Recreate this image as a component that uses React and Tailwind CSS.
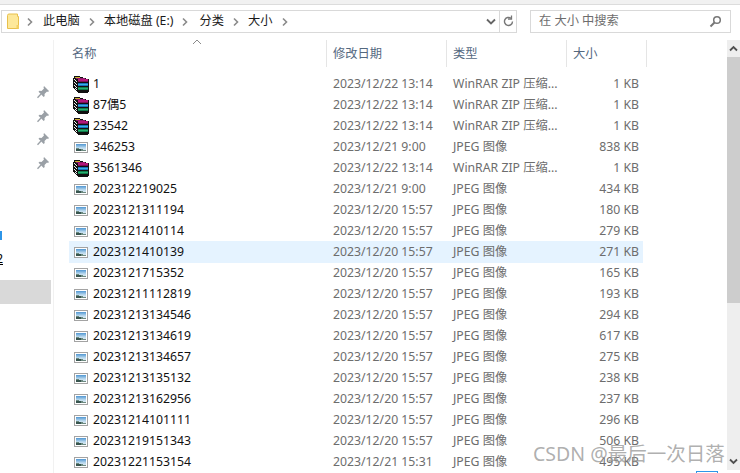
import React from "react";

const zip = "WinRAR ZIP 压缩...";
const jpg = "JPEG 图像";
const rows = [
  ["1", "z", "2023/12/22 13:14", zip, "1 KB"],
  ["87偶5", "z", "2023/12/22 13:14", zip, "1 KB"],
  ["23542", "z", "2023/12/22 13:14", zip, "1 KB"],
  ["346253", "j", "2023/12/21 9:00", jpg, "838 KB"],
  ["3561346", "z", "2023/12/22 13:14", zip, "1 KB"],
  ["202312219025", "j", "2023/12/21 9:00", jpg, "434 KB"],
  ["2023121311194", "j", "2023/12/20 15:57", jpg, "180 KB"],
  ["2023121410114", "j", "2023/12/20 15:57", jpg, "279 KB"],
  ["2023121410139", "j", "2023/12/20 15:57", jpg, "271 KB", true],
  ["2023121715352", "j", "2023/12/20 15:57", jpg, "165 KB"],
  ["20231211112819", "j", "2023/12/20 15:57", jpg, "193 KB"],
  ["20231213134546", "j", "2023/12/20 15:57", jpg, "294 KB"],
  ["20231213134619", "j", "2023/12/20 15:57", jpg, "617 KB"],
  ["20231213134657", "j", "2023/12/20 15:57", jpg, "275 KB"],
  ["20231213135132", "j", "2023/12/20 15:57", jpg, "238 KB"],
  ["20231213162956", "j", "2023/12/20 15:57", jpg, "237 KB"],
  ["20231214101111", "j", "2023/12/20 15:57", jpg, "296 KB"],
  ["20231219151343", "j", "2023/12/20 15:57", jpg, "506 KB"],
  ["20231221153154", "j", "2023/12/21 15:31", jpg, "495 KB"],
];

function Zip() {
  return (
    <svg width="18" height="18" viewBox="0 0 18 18" shapeRendering="crispEdges" className="shrink-0">
      <path d="M2 0h6v1h3v1h3v1h3v13h-1v1H6v-1H5v-1H4v-1H3v-1H2v-1H1V2h1z" fill="#111" />
      <rect x="3" y="1" width="5" height="1" fill="#d0b030" />
      <rect x="4" y="2" width="9" height="1" fill="#8e1a6c" />
      <rect x="6" y="3" width="10" height="3" fill="#b3177a" />
      <rect x="6" y="5" width="10" height="1" fill="#7d1058" />
      <rect x="6" y="7" width="10" height="3" fill="#1c6fc0" />
      <rect x="6" y="8" width="10" height="1" fill="#35b4e0" />
      <rect x="6" y="11" width="10" height="3" fill="#0f7d4c" />
      <rect x="6" y="12" width="10" height="1" fill="#28b070" />
      <path d="M2 3h1v1h1v1h1v1H4V5H3V4H2zM2 6h1v1h1v1h1v1H4V8H3V7H2zM2 9h1v1h1v1h1v1H4v-1H3v-1H2zM3 12h1v1h1v1H4v-1H3z" fill="#f4f4f4" />
    </svg>
  );
}

function Jpg() {
  return (
    <svg width="18" height="18" viewBox="0 0 18 18" shapeRendering="crispEdges" className="shrink-0">
      <rect x="2.500" y="3.500" width="13" height="10" fill="#fff" stroke="#a3a3a3" />
      <defs>
        <linearGradient id="sky" x1="0" y1="0" x2="0" y2="1">
          <stop offset="0" stopColor="#4f96d2" />
          <stop offset="0.55" stopColor="#bcdaee" />
          <stop offset="1" stopColor="#e4eef4" />
        </linearGradient>
      </defs>
      <rect x="4" y="5" width="10" height="7" fill="url(#sky)" />
      <path d="M4 9h3v1h4v1h3v1H4z" fill="#6c8a80" />
      <rect x="4" y="10" width="5" height="2" fill="#38554f" />
    </svg>
  );
}

function Pin() {
  return (
    <svg width="14" height="14" viewBox="0 0 14 14" className="block">
      <path d="M8 1l5 5-1 1-1-.5L8.500 9l.2 2-1 1L2.500 6.800l1-1 2 .2L8 3.500 7.500 2.500z" fill="#9aa0a6" />
      <path d="M5 9l-3.500 3.800" stroke="#9aa0a6" strokeWidth="1.300" />
    </svg>
  );
}

function Chev() {
  return (
    <svg width="8" height="10" viewBox="0 0 8 10" className="block shrink-0">
      <path d="M2 1.500 5.500 5 2 8.500" fill="none" stroke="#8a8a8a" strokeWidth="1.600" />
    </svg>
  );
}

function Folder() {
  return (
    <svg width="14" height="17" viewBox="0 0 14 17" className="shrink-0">
      <path d="M1.500 2.500q0-1.500 1.500-1.500h8.500v2.500h1v12h-11z" fill="#fde89a" stroke="#e8c04c" />
      <rect x="10.500" y="12" width="2.500" height="3.500" fill="#f3cf62" />
    </svg>
  );
}

function Icon({ t }) {
  return t === "z" ? <Zip /> : <Jpg />;
}

export default function App() {
  return (
    <div className="relative w-[740px] h-[473px] overflow-hidden bg-white text-[12.25px] font-['Noto_Sans','Noto_Sans_CJK_SC',sans-serif]">
      <div className="h-[5px] bg-[#f1f1f1] border-b border-[#dcdcdc]" />

      <div className="flex h-[23px] mt-[5px] pl-px pr-[9px] gap-[13px]">
        <div className="flex w-[516px] border border-[#d9d9d9]">
          <div className="flex flex-1 items-center pl-[4px] text-[#1a1a1a]">
            <Folder />
            <span className="ml-[6px]"><Chev /></span>
            <span className="ml-[9px]">此电脑</span>
            <span className="ml-[8px]"><Chev /></span>
            <span className="ml-[8px]">本地磁盘 (E:)</span>
            <span className="ml-[8px]"><Chev /></span>
            <span className="ml-[10px]">分类</span>
            <span className="ml-[8px]"><Chev /></span>
            <span className="ml-[8px]">大小</span>
            <span className="ml-[9px]"><Chev /></span>
          </div>
          <div className="flex items-center pr-[3px]">
            <svg width="10" height="8" viewBox="0 0 10 8"><path d="M1 1.500 5 5.500 9 1.500" fill="none" stroke="#666" strokeWidth="1.800" /></svg>
          </div>
          <div className="flex items-center justify-center w-[17px] border-l border-[#d9d9d9]">
            <svg width="13" height="13" viewBox="0 0 13 13"><path d="M10.500 6.500a4 4 0 1 1-1.500-3.200" fill="none" stroke="#777" strokeWidth="1.400" /><path d="M9.500 .5v3.500H6" fill="none" stroke="#777" strokeWidth="1.300" /></svg>
          </div>
        </div>
        <div className="flex flex-1 items-center justify-between border border-[#d9d9d9] pl-[8px] pr-[8px] text-[#6d6d6d]">
          <span>在 大小 中搜索</span>
          <svg width="13" height="13" viewBox="0 0 13 13"><circle cx="8" cy="5" r="3.300" fill="none" stroke="#777" strokeWidth="1.500" /><path d="M5.500 7.500 1.500 11.500" stroke="#777" strokeWidth="2" /></svg>
        </div>
      </div>

      <div className="flex h-[433px] mt-[7px]">
        <aside className="w-[54px] shrink-0 border-r border-[#f1f1f1]">
          <div className="flex flex-col items-end gap-[9.700px] pt-[45px] pr-[3px]">
            <Pin /><Pin /><Pin /><Pin />
          </div>
          <div className="mt-[61px] w-[2px] h-[9px] bg-[#2d95e8]" />
          <div className="mt-[13px] w-[3px] flex justify-end overflow-hidden text-[12px] leading-[11px] border-b border-black text-black">
            <span>2</span>
          </div>
          <div className="mt-[15px] w-[51px] h-[24px] bg-[#d9d9d9]" />
        </aside>

        <main className="flex-1 min-w-0 flex flex-col pl-[15px]">
          <div className="relative flex h-[27px] text-[#54687f]">
            <div className="w-[258px] pl-[3px] pt-[5px] border-r border-[#e5e5e5]">名称</div>
            <div className="w-[120px] pl-[6px] pt-[5px] border-r border-[#e5e5e5]">修改日期</div>
            <div className="w-[120px] pl-[6px] pt-[5px] border-r border-[#e5e5e5]">类型</div>
            <div className="w-[80px] pl-[6px] pt-[5px] border-r border-[#e5e5e5]">大小</div>
            <svg width="10" height="6" viewBox="0 0 10 6" className="absolute left-[123px] top-[-1px]"><path d="M1 5 5 1 9 5" fill="none" stroke="#8a8a8a" /></svg>
          </div>
          <div className="mt-[7px] flex flex-col w-[574px]">
            {rows.map((r) => (
              <div key={r[0]} className={r[5] ? "flex h-[22px] -mt-px pt-px items-center bg-[#e5f3ff]" : "flex h-[21px] items-center"}>
                <div className="flex items-center w-[258px] pl-[3px] text-[#111]">
                  <Icon t={r[1]} />
                  <span className="ml-[3px] whitespace-nowrap">{r[0]}</span>
                </div>
                <div className="w-[120px] pl-[6px] text-[#6d6d6d] whitespace-nowrap">{r[2]}</div>
                <div className="w-[108px] pl-[6px] text-[#6d6d6d] whitespace-nowrap">{r[3]}</div>
                <div className="w-[84px] text-right text-[#6d6d6d] whitespace-nowrap">{r[4]}</div>
              </div>
            ))}
          </div>
        </main>

        <div className="w-[13px] shrink-0 mb-[3px] flex flex-col bg-[#eeeeee]">
          <div className="h-[17px] flex items-center justify-center">
            <svg width="9" height="7" viewBox="0 0 9 7"><path d="M1 5.500 4.500 2 8 5.500" fill="none" stroke="#505050" strokeWidth="1.800" /></svg>
          </div>
          <div className="h-[246px] bg-[#cdcdcd]" />
          <div className="flex-1" />
          <div className="h-[17px] flex items-center justify-center">
            <svg width="9" height="7" viewBox="0 0 9 7"><path d="M1 1.500 4.500 5 8 1.500" fill="none" stroke="#505050" strokeWidth="1.800" /></svg>
          </div>
        </div>
      </div>

      <div className="absolute left-[533px] top-[443px] text-[19.5px] leading-[22px] text-[#9a9a9acc] whitespace-nowrap">CSDN @最后一次日落</div>
      <div className="absolute left-[696px] top-[471px] w-[22px] h-[2px] border border-b-0 border-[#2d95e8] bg-white" />
    </div>
  );
}
